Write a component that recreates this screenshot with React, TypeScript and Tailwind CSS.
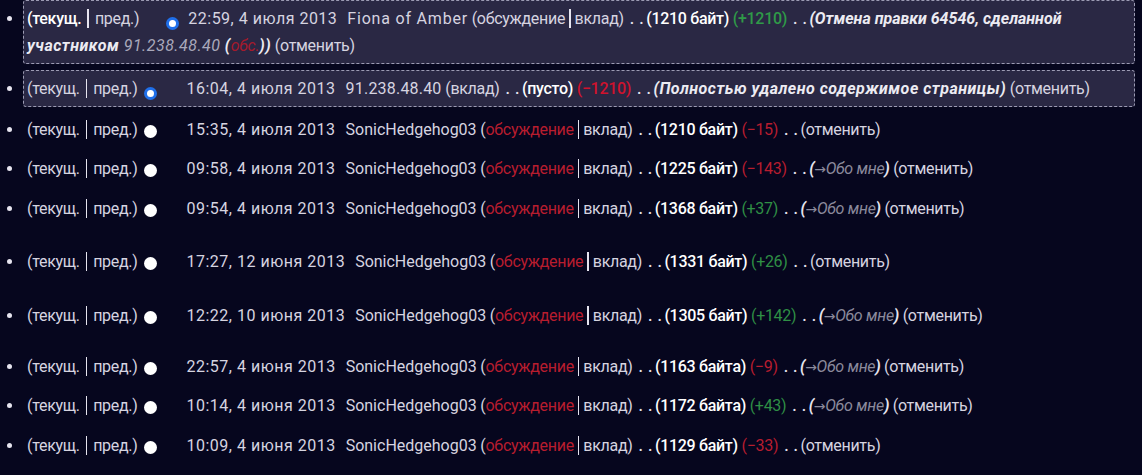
import React from 'react';

type Row = {
  time: string;
  user: string;
  talkRed: boolean;
  hasContribsOnly?: boolean;
  size: string;
  diff: string;
  diffTone: 'green' | 'red' | 'greenBold' | 'redBold';
  summary?: 'obo' | 'blank';
  mt: string;
  radio: 'first' | 'plain';
  boxed?: boolean;
};

const rows: Row[] = [
  { time: '16:04, 4 июля 2013', user: '91.238.48.40', talkRed: false, hasContribsOnly: true, size: '(пусто)', diff: '(−1210)', diffTone: 'redBold', summary: 'blank', mt: 'mt-[6px]', radio: 'first', boxed: true },
  { time: '15:35, 4 июля 2013', user: 'SonicHedgehog03', talkRed: true, size: '(1210 байт)', diff: '(−15)', diffTone: 'red', mt: 'mt-[4px]', radio: 'plain' },
  { time: '09:58, 4 июля 2013', user: 'SonicHedgehog03', talkRed: true, size: '(1225 байт)', diff: '(−143)', diffTone: 'red', summary: 'obo', mt: 'mt-[2px]', radio: 'plain' },
  { time: '09:54, 4 июля 2013', user: 'SonicHedgehog03', talkRed: true, size: '(1368 байт)', diff: '(+37)', diffTone: 'green', summary: 'obo', mt: 'mt-[3px]', radio: 'plain' },
  { time: '17:27, 12 июня 2013', user: 'SonicHedgehog03', talkRed: true, size: '(1331 байт)', diff: '(+26)', diffTone: 'green', mt: 'mt-[16px]', radio: 'plain' },
  { time: '12:22, 10 июня 2013', user: 'SonicHedgehog03', talkRed: true, size: '(1305 байт)', diff: '(+142)', diffTone: 'green', summary: 'obo', mt: 'mt-[17px]', radio: 'plain' },
  { time: '22:57, 4 июня 2013', user: 'SonicHedgehog03', talkRed: true, size: '(1163 байта)', diff: '(−9)', diffTone: 'red', summary: 'obo', mt: 'mt-[14px]', radio: 'plain' },
  { time: '10:14, 4 июня 2013', user: 'SonicHedgehog03', talkRed: true, size: '(1172 байта)', diff: '(+43)', diffTone: 'green', summary: 'obo', mt: 'mt-[2px]', radio: 'plain' },
  { time: '10:09, 4 июня 2013', user: 'SonicHedgehog03', talkRed: true, size: '(1129 байт)', diff: '(−33)', diffTone: 'red', mt: 'mt-[3px]', radio: 'plain' },
];

function Bar({ wide }: { wide?: boolean }) {
  return (
    <span
      className={`inline-block w-[1.5px] h-[19px] bg-[#e6e4ef] align-[-4px] ${wide ? 'mx-[6px]' : 'mx-[4px]'}`}
    />
  );
}

function Dots() {
  return <span className="font-medium text-[#e6e4ef] ml-[6px] mr-[2px] tracking-[0.5px]">. .</span>;
}

function Radio({ kind }: { kind: 'checked' | 'plain' | 'hidden' }) {
  if (kind === 'hidden') return <span className="inline-block w-[13px] h-[13px] ml-[7px]" />;
  if (kind === 'checked')
    return (
      <span className="inline-flex items-center justify-center w-[13px] h-[13px] ml-[7px] rounded-full bg-[#1f6fea] align-[-3px]">
        <span className="w-[7px] h-[7px] rounded-full bg-white" />
      </span>
    );
  return <span className="inline-block w-[13px] h-[13px] ml-[7px] rounded-full bg-white align-[-3px]" />;
}

function Bullet() {
  return (
    <div className="w-[23px] shrink-0 h-[37px] flex items-center pl-[7px]">
      <span className="w-[5px] h-[5px] rounded-full bg-[#e6e4ef]" />
    </div>
  );
}

function Prefix({ current }: { current?: boolean }) {
  return (
    <>
      <span className={current ? 'font-medium text-white' : ''}>(текущ.</span>
      <Bar wide />
      <span>пред.)</span>
    </>
  );
}

function diffClass(t: Row['diffTone']) {
  if (t === 'green') return 'text-[#2f8f45]';
  if (t === 'red') return 'text-[#b71d2f]';
  if (t === 'greenBold') return 'text-[#2f9a48] font-medium';
  return 'text-[#d0122d] font-medium';
}

function Obo() {
  return (
    <span className="italic font-bold text-[#e6e4ef]">
      (<span className="font-normal text-[#8b8a9c]"><span className="not-italic leading-none font-['DejaVu_Sans',sans-serif] text-[14px]">→</span>Обо мне</span>)
    </span>
  );
}

const summary = 'italic font-bold text-[#ecebf2] tracking-[0.5px]';

export default function App() {
  return (
    <div className="min-h-screen w-full bg-[#06061e] text-[#d6d4e0] text-[16px] leading-[27px] tracking-[-0.3px] font-['Roboto','Noto_Sans',sans-serif]">
      <ul className="pr-[7px]">
        {/* current revision */}
        <li className="flex">
          <Bullet />
          <div className="flex-1 border border-dashed border-[#9c9bb3] rounded-[3px] bg-[#2a2844] pl-[3px] py-[4px]">
            <Prefix current />
            <Radio kind="hidden" />
            <Radio kind="checked" />
            <span className="ml-[9px] tracking-[0.5px]">22:59, 4 июля 2013</span>
            <span className="ml-[10px] tracking-[0.8px]">Fiona of Amber</span>{' '}
            <span>(обсуждение</span>
            <Bar />
            <span>вклад)</span>
            <Dots />
            <span className="font-medium text-white">(1210 байт)</span>{' '}
            <span className={diffClass('greenBold')}>(+1210)</span>
            <Dots />
            <span className="italic font-bold text-[#ecebf2] tracking-[0px]">(Отмена правки 64546, сделанной</span>
            <br />
            <span className={summary}>участником </span>
            <span className="italic text-[#a9a8bb] tracking-[0.5px]">91.238.48.40 </span>
            <span className={summary}>(</span>
            <span className="italic text-[#a51a2c]">обс.</span>
            <span className={summary}>))</span>{' '}
            <span>(отменить)</span>
          </div>
        </li>

        {rows.map((r, i) => (
          <li key={i} className={`flex ${r.mt}`}>
            <Bullet />
            <div
              className={`flex-1 border rounded-[3px] pl-[3px] py-[4px] whitespace-nowrap ${
                r.boxed ? 'border-dashed border-[#9c9bb3] bg-[#2a2844]' : 'border-transparent'
              }`}
            >
              <Prefix />
              {r.radio === 'first' ? <Radio kind="checked" /> : <Radio kind="plain" />}
              <Radio kind="hidden" />
              <span className="ml-[9px] tracking-[0.5px]">{r.time}</span>
              <span className={`ml-[10px] ${r.hasContribsOnly ? 'tracking-[0.2px]' : 'tracking-[0px]'}`}>{r.user}</span>{' '}
              {r.hasContribsOnly ? (
                <span>(вклад)</span>
              ) : (
                <>
                  <span>(</span>
                  <span className={r.talkRed ? 'text-[#b81d2e]' : ''}>обсуждение</span>
                  <Bar />
                  <span>вклад)</span>
                </>
              )}
              <Dots />
              <span className="font-medium text-white">{r.size}</span>{' '}
              <span className={diffClass(r.diffTone)}>{r.diff}</span>
              <Dots />
              {r.summary === 'obo' && (
                <>
                  <Obo />{' '}
                </>
              )}
              {r.summary === 'blank' && (
                <>
                  <span className={summary}>(Полностью удалено содержимое страницы)</span>{' '}
                </>
              )}
              <span>(отменить)</span>
            </div>
          </li>
        ))}
      </ul>
    </div>
  );
}
